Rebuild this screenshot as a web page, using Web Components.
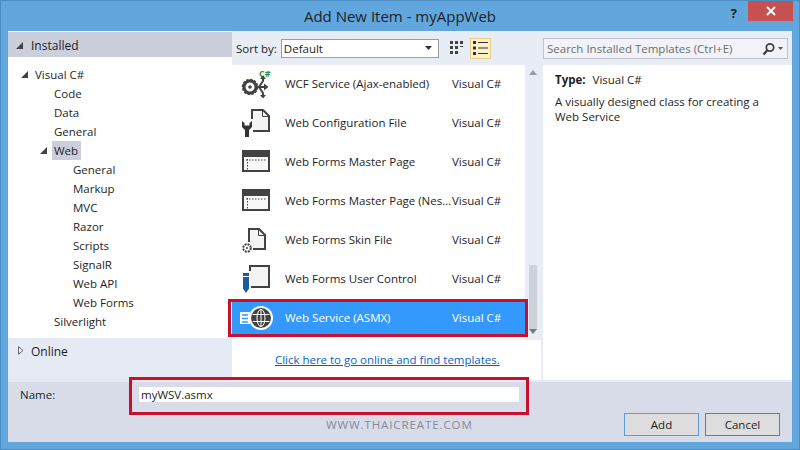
<!DOCTYPE html>
<html>
<head>
<meta charset="utf-8">
<title>Add New Item</title>
<style>
  html, body { margin: 0; padding: 0; }
  body { width: 800px; height: 450px; overflow: hidden; font-family: "Open Sans", "Liberation Sans", sans-serif; font-size: 11.5px; color: #1e1e1e; }
</style>
</head>
<body>

<add-item-dialog>
  <tree-panel slot="left"></tree-panel>
  <template-list slot="center"></template-list>
  <details-panel slot="right"></details-panel>
</add-item-dialog>

<script>
  // one row in the tree on the left
  class TreeRow extends HTMLElement {
    constructor() {
      super();
      this.attachShadow({ mode: 'open' });
      const level = Number(this.getAttribute('level') || 0);
      const arrow = this.hasAttribute('open') ? '<svg width="7" height="7" viewBox="0 0 7 7"><path d="M7 0V7H0Z" fill="#444"/></svg>' : '';
      this.shadowRoot.innerHTML = `
        <style>
          :host { display: flex; height: 19px; align-items: center; padding-left: ${level * 19 + 27}px; position: relative; }
          span { display: block; padding: 0 2px 0 0; line-height: 19px; }
          :host([selected]) span { background: #cbcfdc; padding: 0 3px 0 2px; margin-left: -2px; }
          svg { position: absolute; left: ${level * 19 + 13}px; top: 6px; }
        </style>
        ${arrow}<span><slot></slot></span>
      `;
    }
  }
  customElements.define('tree-row', TreeRow);

  class TreePanel extends HTMLElement {
    constructor() {
      super();
      this.attachShadow({ mode: 'open' });
      this.shadowRoot.innerHTML = `
        <style>
          :host { display: flex; flex-direction: column; height: 100%; background: #fff; }
          .head { height: 25px; margin-top: 1px; background: #cbcfdc; display: flex; align-items: center; gap: 8px; padding: 1px 0 0 8px; box-sizing: border-box; font-size: 12px; flex: none; }
          .tree { flex: 1; padding-top: 8px; }
          .online { height: 44px; background: #e6eaf5; display: flex; gap: 7px; padding: 5px 0 0 10px; box-sizing: border-box; font-size: 12px; flex: none; line-height: 18px; }
          .online svg { margin-top: 3px; }
        </style>
        <div class="head">
          <svg width="7" height="7" viewBox="0 0 7 7"><path d="M7 0V7H0Z" fill="#444"/></svg>
          <span>Installed</span>
        </div>
        <div class="tree">
          <tree-row level="0" open>Visual C#</tree-row>
          <tree-row level="1">Code</tree-row>
          <tree-row level="1">Data</tree-row>
          <tree-row level="1">General</tree-row>
          <tree-row level="1" open selected>Web</tree-row>
          <tree-row level="2">General</tree-row>
          <tree-row level="2">Markup</tree-row>
          <tree-row level="2">MVC</tree-row>
          <tree-row level="2">Razor</tree-row>
          <tree-row level="2">Scripts</tree-row>
          <tree-row level="2">SignalR</tree-row>
          <tree-row level="2">Web API</tree-row>
          <tree-row level="2">Web Forms</tree-row>
          <tree-row level="1">Silverlight</tree-row>
        </div>
        <div class="online">
          <svg width="6" height="9" viewBox="0 0 6 9"><path d="M.5.7 5 4.500.5 8.300Z" fill="#f4f6fb" stroke="#666"/></svg>
          <span>Online</span>
        </div>
      `;
    }
  }
  customElements.define('tree-panel', TreePanel);

  class TemplateRow extends HTMLElement {
    constructor() {
      super();
      this.attachShadow({ mode: 'open' });
      this.shadowRoot.innerHTML = `
        <style>
          :host { display: flex; height: 35px; align-items: center; flex: none; }
          :host([selected]) { background: #3399ff; color: #fff; }
          .icon { width: 36px; height: 35px; margin-left: 6px; flex: none; }
          .name { width: 167px; margin-left: 11px; flex: none; white-space: nowrap; overflow: hidden; padding-bottom: 2px; }
          .type { padding-bottom: 2px; }
        </style>
        <div class="icon"><slot name="icon"></slot></div>
        <div class="name"><slot></slot></div>
        <div class="type">Visual C#</div>
      `;
    }
  }
  customElements.define('template-row', TemplateRow);

  const masterIcon = `<svg slot="icon" width="36" height="35" viewBox="0 0 36 35">
    <rect x="5" y="6" width="26" height="20" fill="#f8f8f8" stroke="#424242" stroke-width="2"/>
    <rect x="4" y="5" width="28" height="7" fill="#424242"/>
    <path d="M8 15H29" stroke="#444" stroke-width="1" stroke-dasharray="1.500 1.500"/>
    <path d="M9.500 14V26" stroke="#444" stroke-width="1" stroke-dasharray="1.500 1.500"/>
  </svg>`;

  class TemplateList extends HTMLElement {
    constructor() {
      super();
      this.attachShadow({ mode: 'open' });
      this.shadowRoot.innerHTML = `
        <style>
          :host { display: flex; flex-direction: column; height: 100%; background: #e8ecf5; padding: 0 2px 2px 0; box-sizing: border-box; }
          .tools { height: 34px; flex: none; display: flex; align-items: center; padding-left: 4px; }
          .sel { width: 158px; height: 19px; box-sizing: border-box; margin-left: 4px; background: #fff; border: 1px solid #9a9da3; display: flex; align-items: center; padding: 0 6px 0 2px; justify-content: space-between; }
          .views { display: flex; align-items: center; margin-left: 11px; gap: 6px; }
          .list-view { width: 21px; height: 21px; box-sizing: border-box; background: #fdf1cc; border: 1px solid #e8cf86; display: flex; align-items: center; justify-content: center; }
          .main { flex: 1; display: flex; min-height: 0; background: #fff; position: relative; }
          .rows { width: 293px; flex: none; display: flex; flex-direction: column; gap: 4px; padding-top: 2px; }
          .scroll { width: 16px; height: 275px; flex: none; background: #e8ecf5; position: relative; }
          .thumb { position: absolute; left: 4px; top: 200px; width: 8px; height: 65px; background: #ced1da; }
          .up, .down { position: absolute; left: 4px; }
          .up { top: 5px; } .down { top: 264px; }
          .link { position: absolute; left: 43px; top: 287px; color: #0b5fc4; text-decoration: underline; white-space: nowrap; letter-spacing: -.02px; }
        </style>
        <div class="tools">
          <span>Sort by:</span>
          <div class="sel"><span>Default</span><svg width="7" height="4" viewBox="0 0 7 4"><path d="M0 0H7L3.500 4Z" fill="#333"/></svg></div>
          <div class="views">
            <svg width="14" height="14" viewBox="0 0 14 14" fill="#424242"><path d="M0 0h3v3H0zM5 0h3v3H5zM10 0h3v3h-3zM0 5h3v3H0zM5 5h3v3H5zM10 5h3v1h-3zM0 10h3v3H0zM5 10h3v3H5z"/></svg>
            <div class="list-view"><svg width="15" height="14" viewBox="0 0 15 14" fill="#333"><path d="M0 0h3v3H0zM5 1h10v1H5zM0 5.500h3v3H0zM5 6.500h10v1H5zM0 11h3v3H0zM5 12h10v1H5z"/></svg></div>
          </div>
        </div>
        <div class="main">
          <div class="rows">
            <template-row>
              <svg slot="icon" width="36" height="35" viewBox="0 0 36 35">
                <text x="21" y="9.500" font-family="Open Sans, sans-serif" font-size="9" font-weight="700" fill="#3c8c3c">C#</text>
                <circle cx="12" cy="20" r="6" fill="none" stroke="#424242" stroke-width="3"/>
                <circle cx="12" cy="20" r="7.500" fill="none" stroke="#424242" stroke-width="1.500" stroke-dasharray="2.500 1.400"/>
                <circle cx="12" cy="20" r="1.800" fill="#424242"/>
                <path d="M18 20H28M21 20L25 14V11M21 20L25 26V29" fill="none" stroke="#424242" stroke-width="2"/>
                <path d="M26 16.500 30.500 20 26 23.500ZM22 12 25 8.500 28 12ZM22 28H28L25 31.500Z" fill="#424242"/>
              </svg>
              WCF Service (Ajax-enabled)
            </template-row>
            <template-row>
              <svg slot="icon" width="36" height="35" viewBox="0 0 36 35">
                <path d="M14 13V4H25L31 10V25H15" fill="#f4f4f4" stroke="#424242" stroke-width="2"/>
                <path d="M24.500 4V10.500H31" fill="none" stroke="#424242" stroke-width="1"/>
                <path d="M4 15V21L7 24V31H11V24L14 21V15L11.500 17V19.500H6.500V17Z" fill="#333"/>
              </svg>
              Web Configuration File
            </template-row>
            <template-row>${masterIcon}Web Forms Master Page</template-row>
            <template-row>${masterIcon}Web Forms Master Page (Nes...</template-row>
            <template-row>
              <svg slot="icon" width="36" height="35" viewBox="0 0 36 35">
                <path d="M11 19V6H21L27 12V26H15" fill="#f4f4f4" stroke="#424242" stroke-width="2"/>
                <path d="M20.500 6V12.500H27" fill="none" stroke="#424242" stroke-width="1"/>
                <circle cx="9" cy="25" r="3.800" fill="#fff" stroke="#424242" stroke-width="2" stroke-dasharray="2 1"/>
                <circle cx="9" cy="25" r="1" fill="#424242"/>
              </svg>
              Web Forms Skin File
            </template-row>
            <template-row>
              <svg slot="icon" width="36" height="35" viewBox="0 0 36 35">
                <path d="M12 9V4H31V25H13" fill="#f4f4f4" stroke="#424242" stroke-width="2"/>
                <path d="M5 11H11V26.500L8 31 5 26.500Z" fill="#1b5c9e"/>
                <path d="M5 14.500H11" stroke="#fff"/>
              </svg>
              Web Forms User Control
            </template-row>
            <template-row selected>
              <svg slot="icon" width="36" height="35" viewBox="0 0 36 35">
                <path d="M2 11H12V23H2Z" fill="#fff"/>
                <path d="M4 14H10M4 17.500H10M4 21H10" stroke="#3399ff" stroke-width="1.300"/>
                <circle cx="23" cy="17" r="12" fill="#fff"/>
                <circle cx="23" cy="17" r="10" fill="#424242"/>
                <g fill="none" stroke="#fff" stroke-width="1">
                  <ellipse cx="23" cy="17" rx="4" ry="8.500"/>
                  <path d="M23 8V26M14.500 13.500H31.500M14.500 20.500H31.500"/>
                </g>
              </svg>
              Web Service (ASMX)
            </template-row>
          </div>
          <div class="scroll">
            <svg class="up" width="8" height="5" viewBox="0 0 8 5"><path d="M0 5 4 0 8 5Z" fill="#9a9da6"/></svg>
            <div class="thumb"></div>
            <svg class="down" width="8" height="5" viewBox="0 0 8 5"><path d="M0 0H8L4 5Z" fill="#77797f"/></svg>
          </div>
          <a class="link">Click here to go online and find templates.</a>
        </div>
      `;
    }
  }
  customElements.define('template-list', TemplateList);

  class DetailsPanel extends HTMLElement {
    constructor() {
      super();
      this.attachShadow({ mode: 'open' });
      this.shadowRoot.innerHTML = `
        <style>
          :host { display: flex; flex-direction: column; height: 100%; padding-bottom: 2px; box-sizing: border-box; background: #e8ecf5; }
          .bar { height: 34px; flex: none; display: flex; align-items: center; }
          .search { width: 245px; height: 21px; box-sizing: border-box; margin-top: 1px; border: 1px solid #c0c3cb; background: #f1f3f8; color: #6d6d6d; display: flex; align-items: center; justify-content: space-between; padding: 0 4px 0 3px; }
          .info { flex: 1; background: #fff; padding: 7px 12px; line-height: 15px; }
          .type { margin-bottom: 7px; }
          b { margin-right: 4px; }
        </style>
        <div class="bar">
          <div class="search">
            <span>Search Installed Templates (Ctrl+E)</span>
            <svg width="22" height="14" viewBox="0 0 22 14">
              <circle cx="9" cy="5.500" r="3.700" fill="none" stroke="#424242" stroke-width="1.800"/>
              <path d="M6.500 8 2.500 12.500" stroke="#424242" stroke-width="2.400"/>
              <path d="M17 5h5l-2.500 3z" fill="#555"/>
            </svg>
          </div>
        </div>
        <div class="info">
          <div class="type"><b>Type:</b> Visual C#</div>
          <div>A visually designed class for creating a<br>Web Service</div>
        </div>
      `;
    }
  }
  customElements.define('details-panel', DetailsPanel);

  class DlgButton extends HTMLElement {
    constructor() {
      super();
      this.attachShadow({ mode: 'open' });
      this.shadowRoot.innerHTML = `
        <style>
          :host { display: flex; width: 75px; height: 23px; box-sizing: border-box; align-items: center; justify-content: center; background: #dddddd; border: 1px solid #7a7a7a; }
          :host([primary]) { border-color: #5a9fdc; }
        </style>
        <slot></slot>
      `;
    }
  }
  customElements.define('dlg-button', DlgButton);

  class AddItemDialog extends HTMLElement {
    constructor() {
      super();
      this.attachShadow({ mode: 'open' });
      this.shadowRoot.innerHTML = `
        <style>
          :host { display: flex; flex-direction: column; width: 800px; height: 450px; box-sizing: border-box; padding: 0 7px 7px; background: #62a6de; border: 1px solid #4a8cc4; position: relative; margin: 0; }
          .title { height: 30px; flex: none; position: relative; display: flex; align-items: center; justify-content: center; font-size: 15px; color: #1f1f1f; }
          .help { position: absolute; right: 55px; top: 3px; font-size: 13px; font-weight: 700; color: #222; line-height: 18px; }
          .close { position: absolute; right: -1px; top: 0; width: 45px; height: 20px; background: #c75050; display: flex; align-items: center; justify-content: center; }
          .main { flex: 1; display: grid; grid-template-columns: 224px 311px 1fr; min-height: 0; }
          .foot { height: 60px; flex: none; background: #d8dbe8; display: flex; flex-direction: column; }
          .name-row { display: flex; align-items: center; height: 15px; margin-top: 5px; }
          .name-row label { width: 131px; padding-left: 12px; box-sizing: border-box; }
          .name-row div { width: 380px; height: 15px; background: #fff; line-height: 15px; padding-left: 2px; box-sizing: border-box; }
          .btn-row { display: flex; gap: 6px; margin-top: 11px; align-items: center; }
          .mark { margin-left: 318px; margin-right: 142px; width: 150px; white-space: nowrap; color: #868a99; font-size: 11.5px; letter-spacing: .9px; }
          .red { position: absolute; border: 3px solid #c8102e; box-sizing: border-box; }
        </style>
        <div class="title">
          Add New Item - myAppWeb
          <span class="help">?</span>
          <span class="close"><svg width="10" height="10" viewBox="0 0 10 10"><path d="M1 1 9 9M9 1 1 9" stroke="#fff" stroke-width="2"/></svg></span>
        </div>
        <div class="main">
          <slot name="left"></slot>
          <slot name="center"></slot>
          <slot name="right"></slot>
        </div>
        <div class="foot">
          <div class="name-row"><label>Name:</label><div>myWSV.asmx</div></div>
          <div class="btn-row">
            <span class="mark">WWW.THAICREATE.COM</span>
          </div>
        </div>
        <div class="red" style="left:227px;top:298px;width:300px;height:38px"></div>
        <div class="red" style="left:128px;top:376px;width:400px;height:38px"></div>
      `;
      const row = this.shadowRoot.querySelector('.btn-row');
      row.insertAdjacentHTML('beforeend', '<dlg-button primary>Add</dlg-button><dlg-button>Cancel</dlg-button>');
    }
  }
  customElements.define('add-item-dialog', AddItemDialog);
</script>
</body>
</html>
